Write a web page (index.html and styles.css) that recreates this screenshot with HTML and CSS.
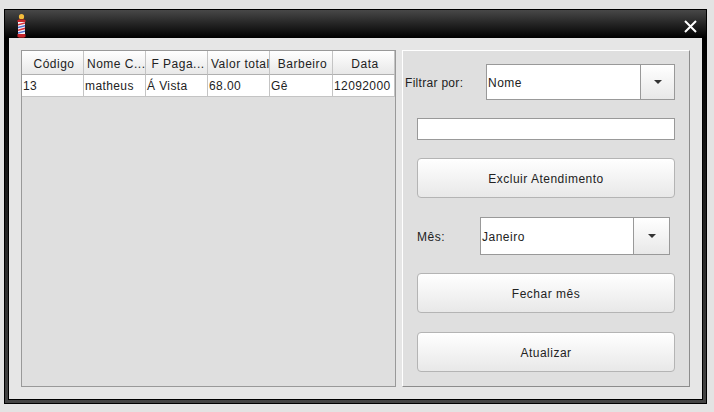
FILE: index.html
```html
<!DOCTYPE html>
<html lang="pt">
<head>
<meta charset="utf-8">
<title>Atendimentos</title>
<link rel="stylesheet" href="styles.css">
</head>
<body>
<div class="window">
  <header class="titlebar">
    <svg class="pole" width="9" height="24" viewBox="0 0 9 24">
      <circle cx="4.5" cy="2.7" r="2.6" fill="#f4bd3c"/>
      <rect x="1.5" y="5" width="6" height="1" fill="#8a2a1c"/>
      <rect x="0.5" y="6" width="8" height="2" fill="#c9252b"/>
      <rect x="1" y="8" width="7" height="12" fill="#f6f6fa"/>
      <path d="M1 10 8 8.2v1.6L1 11.6zM1 15.4 8 13.6v1.6L1 17z" fill="#d9303a"/>
      <path d="M1 12.8 8 11v1.5L1 14.3zM1 18.2 8 16.4v1.6L1 19.8z" fill="#5270cc"/>
      <rect x="0.5" y="20" width="8" height="3" fill="#c9252b"/>
      <rect x="1.5" y="23" width="6" height="1" fill="#7a1a1c"/>
    </svg>
    <svg class="close" width="13" height="13" viewBox="0 0 13 13">
      <path d="M1 1 12 12M12 1 1 12" stroke="#fff" stroke-width="2" fill="none"/>
    </svg>
  </header>
  <div class="frame">
    <main class="content">
      <section class="table-panel">
        <table class="grid">
          <colgroup>
            <col class="col"><col class="col"><col class="col"><col class="col"><col class="col-wide"><col class="col">
          </colgroup>
          <thead>
            <tr><th>Código</th><th>Nome C...</th><th>F Paga...</th><th>Valor total</th><th>Barbeiro</th><th>Data</th></tr>
          </thead>
          <tbody>
            <tr><td>13</td><td>matheus</td><td>Á Vista</td><td>68.00</td><td>Gê</td><td>12092000</td></tr>
          </tbody>
        </table>
      </section>
      <section class="side-panel">
        <div class="filter-row">
          <span class="filter-label">Filtrar por:</span>
          <div class="combo combo-filter">
            <span class="combo-value">Nome</span>
            <span class="combo-btn"><i class="arrow"></i></span>
          </div>
        </div>
        <div class="search-box"></div>
        <button class="btn btn-delete" type="button">Excluir Atendimento</button>
        <div class="month-row">
          <span class="month-label">Mês:</span>
          <div class="combo combo-month">
            <span class="combo-value">Janeiro</span>
            <span class="combo-btn"><i class="arrow"></i></span>
          </div>
        </div>
        <button class="btn btn-close-month" type="button">Fechar mês</button>
        <button class="btn btn-refresh" type="button">Atualizar</button>
      </section>
    </main>
  </div>
</div>
</body>
</html>
```

FILE: styles.css
```css
* { box-sizing: border-box; }
html, body { margin: 0; padding: 0; }
body {
  width: 714px;
  height: 412px;
  overflow: hidden;
  background: #e3e3e3;
  font-family: "Liberation Sans", Arial, sans-serif;
  font-size: 12px;
  letter-spacing: 0.5px;
  color: #222;
  padding: 9px 0 0 4px;
}
.window {
  width: 703px;
  height: 395px;
  border: 1px solid #000;
  display: flex;
  flex-direction: column;
}
.titlebar {
  height: 28px;
  flex: none;
  background: linear-gradient(#484848, #000);
  display: flex;
  justify-content: space-between;
  padding: 4px 9px 0 12px;
}
.pole { display: block; }
.close { display: block; margin-top: 6px; }
.frame {
  flex: 1;
  min-height: 0;
  padding: 0 3px 3px;
  background: linear-gradient(#000, #444);
  display: flex;
}
.content {
  flex: 1;
  background: #e6e6e6;
  border: 1px solid #000;
  border-top: 0;
  padding: 12px;
  display: flex;
  gap: 6px;
}
.table-panel {
  width: 375px;
  flex: none;
  border: 1px solid #999;
  background: #dfdfdf;
}
.grid {
  border-collapse: separate;
  border-spacing: 0;
  table-layout: fixed;
  width: 373px;
}
.col { width: 62px; }
.col-wide { width: 63px; }
.grid th, .grid td {
  padding: 1px 0 0;
  font-weight: normal;
  white-space: nowrap;
  overflow: hidden;
  border-right: 1px solid #c4c4c4;
  border-bottom: 1px solid #c4c4c4;
}
.grid td { letter-spacing: 0.4px; }
.grid th {
  height: 24px;
  padding: 2px 0 0 3px;
  overflow: visible;
  text-align: center;
  background: linear-gradient(#fff, #e8e8e8);
  border-bottom-color: #b0b0b0;
}
.grid td {
  height: 22px;
  background: #fff;
  padding-left: 1px;
}
.side-panel {
  flex: 1;
  border: 1px solid;
  border-color: #fff #8c8c8c #8c8c8c #fff;
  background: #dfdfdf;
  padding: 13px 14px 0 2px;
  display: flex;
  flex-direction: column;
}
.filter-row { display: flex; align-items: center; height: 36px; }
.filter-label { width: 81px; flex: none; padding-top: 2px; letter-spacing: 0.3px; }
.combo {
  display: flex;
  border: 1px solid #999;
  background: #fff;
}
.combo-filter { flex: 1; height: 36px; }
.combo-value { flex: 1; padding: 2px 0 0 1px; align-self: center; }
.combo-btn {
  width: 34px;
  flex: none;
  border-left: 1px solid #999;
  background: linear-gradient(#fff, #e8e8e8);
  display: flex;
  align-items: center;
  justify-content: center;
}
.combo-month .combo-btn { width: 36px; }
.arrow {
  width: 0;
  height: 0;
  border-left: 4px solid transparent;
  border-right: 4px solid transparent;
  border-top: 4px solid #333;
}
.search-box {
  height: 22px;
  margin: 18px 0 0 12px;
  border: 1px solid #999;
  background: #fff;
}
.btn {
  display: block;
  width: 258px;
  height: 40px;
  margin-left: 12px;
  padding: 2px 0 0;
  border: 1px solid #b4b4b4;
  border-radius: 4px;
  background: linear-gradient(#fff, #e8e8e8);
  font: inherit;
  letter-spacing: inherit;
  color: inherit;
}
.btn-delete { margin-top: 18px; }
.month-row {
  display: flex;
  align-items: center;
  height: 38px;
  margin: 19px 5px 0 12px;
}
.month-label { width: 63px; flex: none; padding-top: 2px; }
.combo-month { flex: 1; height: 38px; }
.btn-close-month { margin-top: 18px; }
.btn-refresh { margin-top: 19px; }
```
